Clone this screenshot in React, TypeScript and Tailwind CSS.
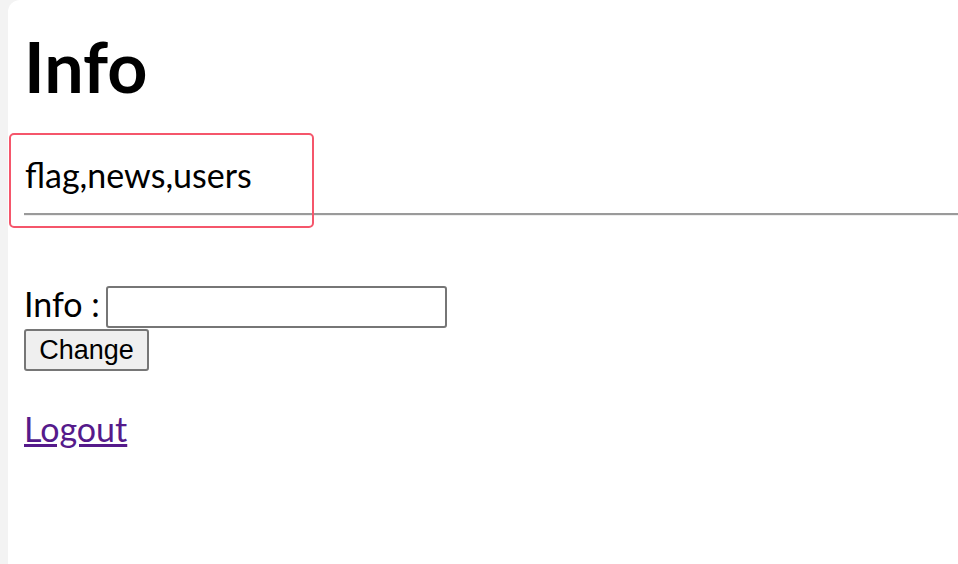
import React from 'react';

export default function App() {
  return (
    <div className="flex h-[564px] w-[958px] overflow-hidden bg-[#f3f3f3] font-['Lato',sans-serif] text-black">
      <div className="ml-[8px] flex-1 rounded-tl-[12px] bg-white pl-[16px]">
        <h1 className="mt-[26px] text-[70px] font-bold leading-[80px]">Info</h1>
        <div className="relative mt-[48px]">
          <p className="pl-px text-[34px] leading-[42px]">flag,news,users</p>
          <hr className="mt-[17px] mr-[-20px] border-t-2 border-b border-t-[#9a9a9a] border-b-[#eeeeee]" />
          <div className="pointer-events-none absolute left-[-15px] top-[-21px] h-[95px] w-[305px] rounded-[5px] border-2 border-[#f5566b]" />
        </div>
        <div className="mt-[70px] flex items-center gap-[6px]">
          <span className="mb-[6px] text-[34px] leading-[34px]">Info :</span>
          <input
            type="text"
            className="h-[42px] w-[341px] rounded-[3px] border-2 border-[#767676] bg-white"
          />
        </div>
        <button className="mt-[1px] h-[42px] w-[125px] rounded-[3px] border-2 border-[#767676] bg-[#efefef] font-['Liberation_Sans',sans-serif] text-[27px] leading-none">
          Change
        </button>
        <div className="mt-[38px]">
          <a href="#" className="text-[34px] leading-[40px] text-[#551a8b] underline">
            Logout
          </a>
        </div>
      </div>
    </div>
  );
}
